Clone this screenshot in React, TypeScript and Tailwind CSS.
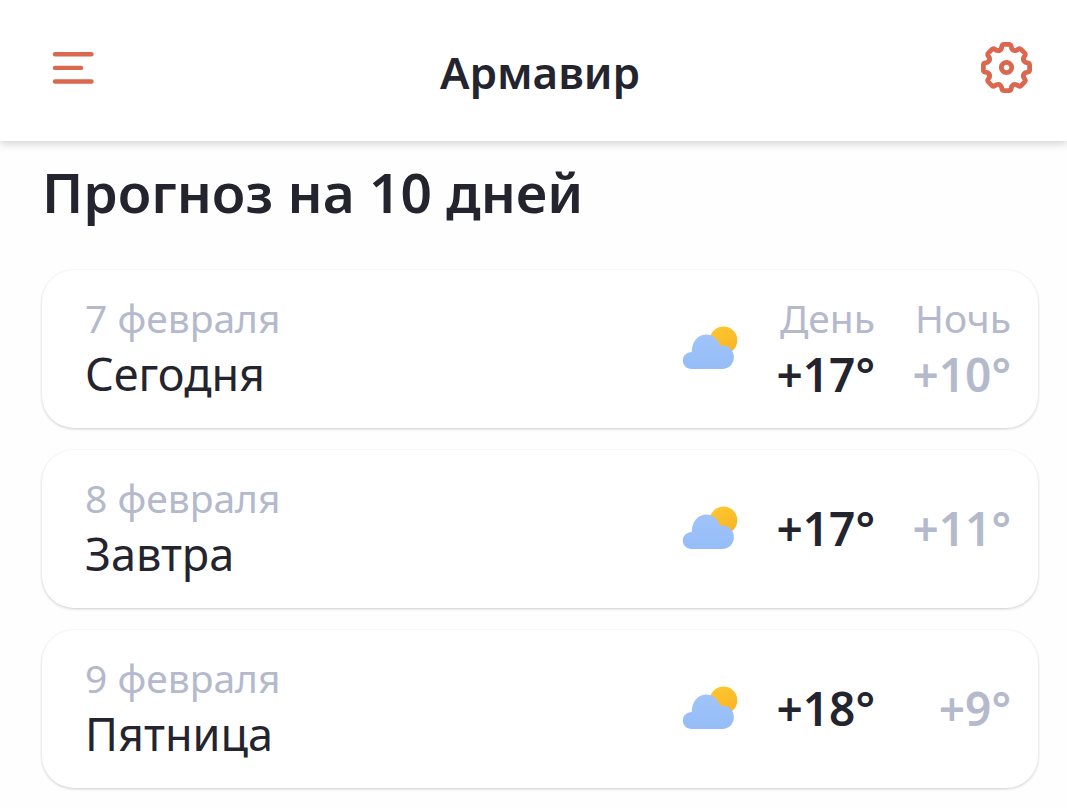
type Forecast = { date: string; day: string; high: string; low: string };

const forecasts: Forecast[] = [
  { date: "7 февраля", day: "Сегодня", high: "+17°", low: "+10°" },
  { date: "8 февраля", day: "Завтра", high: "+17°", low: "+11°" },
  { date: "9 февраля", day: "Пятница", high: "+18°", low: "+9°" },
];

// One tooth of the gear, pointing up, followed by the rounded notch to its right.
const toothPath: [string, [number, number][]][] = [
  ["L", [[-5.2, -18.6]]],
  ["L", [[-4.7, -21.2]]],
  ["Q", [[-4.3, -23.1], [-2.4, -23.1]]],
  ["L", [[2.4, -23.1]]],
  ["Q", [[4.3, -23.1], [4.7, -21.2]]],
  ["L", [[5, -19.4]]],
  ["Q", [[6.6, -16], [10.18, -17.25]]],
];

const gearPath =
  Array.from({ length: 8 }, (_, i) => {
    const a = (i * Math.PI) / 4;
    return toothPath
      .slice(i === 0 ? 0 : 1)
      .map(([command, points], n) => {
        const turned = points.map(
          ([x, y]) => `${(x * Math.cos(a) - y * Math.sin(a)).toFixed(2)} ${(x * Math.sin(a) + y * Math.cos(a)).toFixed(2)}`,
        );
        return (i === 0 && n === 0 ? "M" : command) + turned.join(" ");
      })
      .join("");
  }).join("") + "Z";

function GearIcon() {
  return (
    <svg viewBox="-26.5 -25.5 52 52" className="size-[52px]" fill="none" stroke="#dc674f" strokeWidth="4.8" strokeLinejoin="round" aria-hidden="true">
      <path d={gearPath} />
      <circle r="5.2" />
    </svg>
  );
}

function MenuIcon() {
  return (
    <svg viewBox="0 0 42 34" className="h-[34px] w-[42px]" fill="none" stroke="#dc674f" strokeWidth="4.4" strokeLinecap="round" aria-hidden="true">
      <path d="M3 3.200H39.500M3 16.900H29M3 30.500H39.500" />
    </svg>
  );
}

function CloudIcon() {
  return (
    <svg viewBox="0 0 56 44" className="h-11 w-14" role="img" aria-label="Облачно с прояснениями">
      <defs>
        <linearGradient id="sun" x1="0" y1="0" x2="0.4" y2="1">
          <stop offset="0" stopColor="#fdc932" />
          <stop offset="1" stopColor="#fab526" />
        </linearGradient>
        <linearGradient id="cloud" x1="0" y1="0" x2="0" y2="1">
          <stop offset="0" stopColor="#a0c3fa" />
          <stop offset="1" stopColor="#96bdf7" />
        </linearGradient>
      </defs>
      <circle cx="41.500" cy="14.300" r="13.800" fill="url(#sun)" />
      <path
        fill="url(#cloud)"
        d="M9.500 43C4.500 43 .8 39.200 .8 34.500C.8 29.700 4.700 26 9.800 26C9.800 15.500 16 8.500 24.500 8.500C31 8.500 35.800 12.600 38 19.600C46.500 18.200 51.900 24 51.900 31C51.900 38 47 43 40 43Z"
      />
    </svg>
  );
}

function ForecastCard({ item, labelled }: { item: Forecast; labelled: boolean }) {
  return (
    <li className="flex h-[158px] items-center rounded-[32px] bg-white pr-[27px] pb-0.5 pl-[43px] shadow-[0_1px_3px_rgba(0,0,0,0.2)]">
      <div className="flex-1 pb-1">
        <p className="text-[39px] leading-[56px] text-[#b4b9cc]">{item.date}</p>
        <p className="text-[45px] leading-[56px] text-[#24242e]">{item.day}</p>
      </div>
      <CloudIcon />
      <div className={labelled ? "flex pb-1 text-right" : "flex text-right"}>
        <div className="w-[137px]">
          {labelled && <p className="text-[39px] leading-[56px] text-[#b4b9cc]">День</p>}
          <p className="text-[46px] leading-[56px] font-semibold text-[#24242e]">{item.high}</p>
        </div>
        <div className="w-[136px]">
          {labelled && <p className="text-[39px] leading-[56px] text-[#b4b9cc]">Ночь</p>}
          <p className="text-[46px] leading-[56px] font-semibold text-[#b4b9cc]">{item.low}</p>
        </div>
      </div>
    </li>
  );
}

export default function App() {
  return (
    <div className="min-h-screen bg-[#fefefe] font-['Noto_Sans',sans-serif] text-[#24242e]">
      <header className="grid h-[141px] grid-cols-[1fr_auto_1fr] items-center bg-white pr-[35px] pb-[6px] pl-12 shadow-[0_3px_8px_rgba(0,0,0,0.17)]">
        <button type="button" aria-label="Меню" className="justify-self-start pl-1">
          <MenuIcon />
        </button>
        <h1 className="pt-2 text-[44px] leading-[60px] font-semibold">Армавир</h1>
        <button type="button" aria-label="Настройки" className="justify-self-end">
          <GearIcon />
        </button>
      </header>
      <main className="pt-[13px] pr-[29px] pb-5 pl-[42px]">
        <h2 className="text-[55px] leading-[76px] font-semibold">Прогноз на 10 дней</h2>
        <ul className="mt-10 flex flex-col gap-[22px]">
          {forecasts.map((item, i) => (
            <ForecastCard key={item.date} item={item} labelled={i === 0} />
          ))}
        </ul>
      </main>
    </div>
  );
}
